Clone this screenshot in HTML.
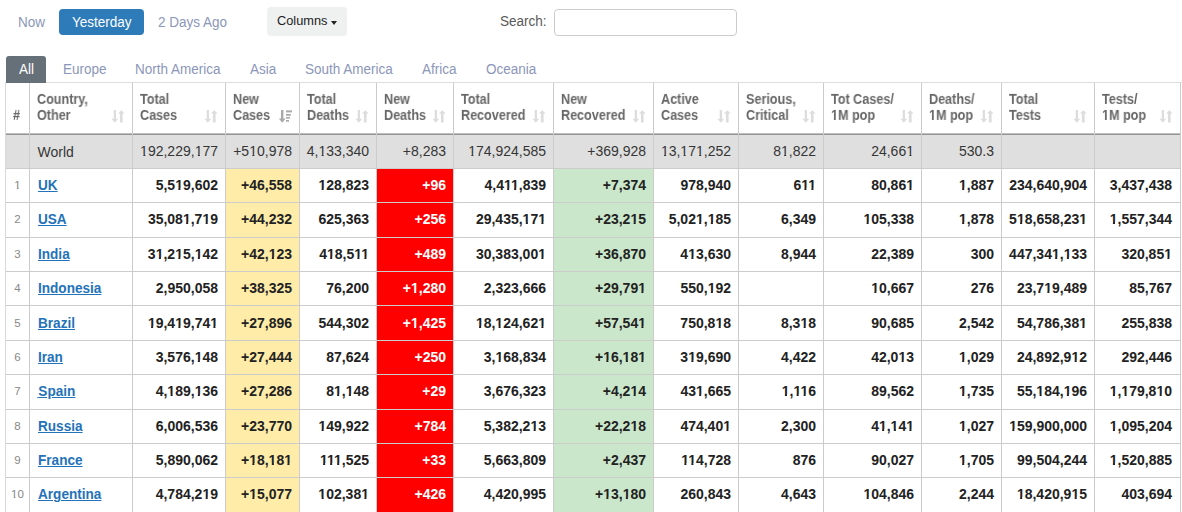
<!DOCTYPE html>
<html><head><meta charset="utf-8">
<style>
html,body{margin:0;padding:0;background:#fff;width:1182px;height:512px;overflow:hidden;}
body{font-family:"Liberation Sans",sans-serif;position:relative;color:#333;}
.abs{position:absolute;white-space:nowrap;}
.lnk{color:#8c96b8;font-size:14px;transform:scaleX(0.965);transform-origin:0 0;}
.tt{font-size:14px;transform:scaleX(0.965);transform-origin:0 0;}
.btn{position:absolute;box-sizing:border-box;}
.vl{position:absolute;width:1px;background:#ccc;}
.hl{position:absolute;height:1px;background:#ccc;}
.cell{position:absolute;white-space:nowrap;}
.hd{font-weight:bold;font-size:13px;color:#666;will-change:transform;line-height:14.8px;transform:scale(0.97,1.08);transform-origin:0 0;}
.num{font-weight:bold;font-size:14px;color:#222;text-align:right;}
.wn{font-size:14px;color:#363636;text-align:right;}
.si{position:absolute;}
.o{clip-path:polygon(0 0,100% 0,100% 0.78em,0.378em 0.78em,0.378em 100%,0.228em 100%,0.228em 0.78em,0 0.78em);}
</style></head><body>

<div class="abs lnk" style="left:18px;top:13.5px;">Now</div>
<div class="btn" style="left:59px;top:9px;width:85px;height:26px;background:#2d7bb8;border-radius:4px;"></div>
<div class="abs tt" style="left:71.5px;top:13.5px;color:#fff;">Yesterday</div>
<div class="abs lnk" style="left:158px;top:13.5px;">2 Days Ago</div>
<div class="btn" style="left:267px;top:7px;width:80px;height:28.5px;background:#eff0f0;border-radius:4px;"></div>
<div class="abs" style="left:277px;top:13px;color:#222;font-size:13.6px;transform:scaleX(0.94);transform-origin:0 0;">Columns</div>
<div class="abs" style="left:330.5px;top:21px;width:0;height:0;border-left:3.5px solid transparent;border-right:3.5px solid transparent;border-top:4px solid #222;"></div>
<div class="abs tt" style="left:500px;top:12.5px;color:#595959;">Search:</div>
<div class="btn" style="left:554px;top:9px;width:183px;height:27px;border:1px solid #ccc;border-radius:4px;"></div>
<div class="btn" style="left:6px;top:56px;width:40px;height:27px;background:#667078;border-radius:3px 3px 0 0;z-index:2;"></div>
<div class="abs tt" style="left:18.5px;top:61px;color:#fff;z-index:3;">All</div>
<div class="abs lnk" style="left:63px;top:61px;">Europe</div>
<div class="abs lnk" style="left:135px;top:61px;">North America</div>
<div class="abs lnk" style="left:250px;top:61px;">Asia</div>
<div class="abs lnk" style="left:305.4px;top:61px;">South America</div>
<div class="abs lnk" style="left:422px;top:61px;">Africa</div>
<div class="abs lnk" style="left:485.8px;top:61px;">Oceania</div>
<div class="abs" style="left:5px;top:135px;width:1175px;height:33px;background:#dfdfdf;"></div>
<div class="abs" style="left:226px;top:169px;width:73px;height:33px;background:#feeca8;"></div>
<div class="abs" style="left:377px;top:169px;width:76px;height:33px;background:#ff0000;"></div>
<div class="abs" style="left:554px;top:169px;width:99px;height:33px;background:#cae7cb;"></div>
<div class="abs" style="left:226px;top:203px;width:73px;height:34px;background:#feeca8;"></div>
<div class="abs" style="left:377px;top:203px;width:76px;height:34px;background:#ff0000;"></div>
<div class="abs" style="left:554px;top:203px;width:99px;height:34px;background:#cae7cb;"></div>
<div class="abs" style="left:226px;top:238px;width:73px;height:33px;background:#feeca8;"></div>
<div class="abs" style="left:377px;top:238px;width:76px;height:33px;background:#ff0000;"></div>
<div class="abs" style="left:554px;top:238px;width:99px;height:33px;background:#cae7cb;"></div>
<div class="abs" style="left:226px;top:272px;width:73px;height:33px;background:#feeca8;"></div>
<div class="abs" style="left:377px;top:272px;width:76px;height:33px;background:#ff0000;"></div>
<div class="abs" style="left:554px;top:272px;width:99px;height:33px;background:#cae7cb;"></div>
<div class="abs" style="left:226px;top:306px;width:73px;height:34px;background:#feeca8;"></div>
<div class="abs" style="left:377px;top:306px;width:76px;height:34px;background:#ff0000;"></div>
<div class="abs" style="left:554px;top:306px;width:99px;height:34px;background:#cae7cb;"></div>
<div class="abs" style="left:226px;top:341px;width:73px;height:33px;background:#feeca8;"></div>
<div class="abs" style="left:377px;top:341px;width:76px;height:33px;background:#ff0000;"></div>
<div class="abs" style="left:554px;top:341px;width:99px;height:33px;background:#cae7cb;"></div>
<div class="abs" style="left:226px;top:375px;width:73px;height:34px;background:#feeca8;"></div>
<div class="abs" style="left:377px;top:375px;width:76px;height:34px;background:#ff0000;"></div>
<div class="abs" style="left:554px;top:375px;width:99px;height:34px;background:#cae7cb;"></div>
<div class="abs" style="left:226px;top:410px;width:73px;height:33px;background:#feeca8;"></div>
<div class="abs" style="left:377px;top:410px;width:76px;height:33px;background:#ff0000;"></div>
<div class="abs" style="left:554px;top:410px;width:99px;height:33px;background:#cae7cb;"></div>
<div class="abs" style="left:226px;top:444px;width:73px;height:33px;background:#feeca8;"></div>
<div class="abs" style="left:377px;top:444px;width:76px;height:33px;background:#ff0000;"></div>
<div class="abs" style="left:554px;top:444px;width:99px;height:33px;background:#cae7cb;"></div>
<div class="abs" style="left:226px;top:478px;width:73px;height:34px;background:#feeca8;"></div>
<div class="abs" style="left:377px;top:478px;width:76px;height:34px;background:#ff0000;"></div>
<div class="abs" style="left:554px;top:478px;width:99px;height:34px;background:#cae7cb;"></div>
<div class="hl" style="left:5px;top:82px;width:1177px;background:#ddd;"></div>
<div class="hl" style="left:5px;top:133px;width:1176px;height:1px;background:#bebebe;"></div>
<div class="hl" style="left:5px;top:134px;width:1176px;height:1px;background:#959595;"></div>
<div class="hl" style="left:5px;top:168px;width:1176px;"></div>
<div class="hl" style="left:5px;top:202px;width:1176px;"></div>
<div class="hl" style="left:5px;top:237px;width:1176px;"></div>
<div class="hl" style="left:5px;top:271px;width:1176px;"></div>
<div class="hl" style="left:5px;top:305px;width:1176px;"></div>
<div class="hl" style="left:5px;top:340px;width:1176px;"></div>
<div class="hl" style="left:5px;top:374px;width:1176px;"></div>
<div class="hl" style="left:5px;top:409px;width:1176px;"></div>
<div class="hl" style="left:5px;top:443px;width:1176px;"></div>
<div class="hl" style="left:5px;top:477px;width:1176px;"></div>
<div class="vl" style="left:5px;top:83px;height:429px;background:#d8d8d8;"></div>
<div class="vl" style="left:29px;top:83px;height:429px;background:#ccc;"></div>
<div class="vl" style="left:132px;top:83px;height:429px;background:#ccc;"></div>
<div class="vl" style="left:225px;top:83px;height:429px;background:#ccc;"></div>
<div class="vl" style="left:299px;top:83px;height:429px;background:#ccc;"></div>
<div class="vl" style="left:376px;top:83px;height:429px;background:#ccc;"></div>
<div class="vl" style="left:453px;top:83px;height:429px;background:#ccc;"></div>
<div class="vl" style="left:553px;top:83px;height:429px;background:#ccc;"></div>
<div class="vl" style="left:653px;top:83px;height:429px;background:#ccc;"></div>
<div class="vl" style="left:738px;top:83px;height:429px;background:#ccc;"></div>
<div class="vl" style="left:823px;top:83px;height:429px;background:#ccc;"></div>
<div class="vl" style="left:921px;top:83px;height:429px;background:#ccc;"></div>
<div class="vl" style="left:1001px;top:83px;height:429px;background:#ccc;"></div>
<div class="vl" style="left:1094px;top:83px;height:429px;background:#ccc;"></div>
<div class="vl" style="left:1180px;top:83px;height:429px;background:#ccc;"></div>
<div class="cell hd" style="left:13px;top:108px;">#</div>
<div class="cell hd" style="left:37px;top:91.5px;">Country,<br>Other</div>
<svg class="si" style="left:111px;top:110px;" width="14" height="13" viewBox="0 0 14 13"><path d="M2.7 0h2.3v8.7h2.2L3.85 12.8L0.4 8.7h2.3z" fill="#ddd"/><path d="M8.9 12.5V3.6H6.9L10.3 0.2L13.7 3.6h-2.1V12.5z" fill="#ddd"/></svg>
<div class="cell hd" style="left:140px;top:91.5px;">Total<br>Cases</div>
<svg class="si" style="left:204px;top:110px;" width="14" height="13" viewBox="0 0 14 13"><path d="M2.7 0h2.3v8.7h2.2L3.85 12.8L0.4 8.7h2.3z" fill="#ddd"/><path d="M8.9 12.5V3.6H6.9L10.3 0.2L13.7 3.6h-2.1V12.5z" fill="#ddd"/></svg>
<div class="cell hd" style="left:233px;top:91.5px;">New<br>Cases</div>
<svg class="si" style="left:279px;top:110px;" width="14" height="13" viewBox="0 0 14 13"><path d="M2 0h2.4v8.6h2.2L3.2 12.8L-0.2 8.6H2z" fill="#aaa"/><rect x="7" y="0.4" width="6" height="2" fill="#aaa"/><rect x="7" y="4" width="4.8" height="1.8" fill="#aaa"/><rect x="7" y="7" width="4" height="1.6" fill="#aaa"/><rect x="7" y="10" width="3" height="1.7" fill="#aaa"/></svg>
<div class="cell hd" style="left:307px;top:91.5px;">Total<br>Deaths</div>
<svg class="si" style="left:355px;top:110px;" width="14" height="13" viewBox="0 0 14 13"><path d="M2.7 0h2.3v8.7h2.2L3.85 12.8L0.4 8.7h2.3z" fill="#ddd"/><path d="M8.9 12.5V3.6H6.9L10.3 0.2L13.7 3.6h-2.1V12.5z" fill="#ddd"/></svg>
<div class="cell hd" style="left:384px;top:91.5px;">New<br>Deaths</div>
<svg class="si" style="left:432px;top:110px;" width="14" height="13" viewBox="0 0 14 13"><path d="M2.7 0h2.3v8.7h2.2L3.85 12.8L0.4 8.7h2.3z" fill="#ddd"/><path d="M8.9 12.5V3.6H6.9L10.3 0.2L13.7 3.6h-2.1V12.5z" fill="#ddd"/></svg>
<div class="cell hd" style="left:461px;top:91.5px;">Total<br>Recovered</div>
<svg class="si" style="left:532px;top:110px;" width="14" height="13" viewBox="0 0 14 13"><path d="M2.7 0h2.3v8.7h2.2L3.85 12.8L0.4 8.7h2.3z" fill="#ddd"/><path d="M8.9 12.5V3.6H6.9L10.3 0.2L13.7 3.6h-2.1V12.5z" fill="#ddd"/></svg>
<div class="cell hd" style="left:561px;top:91.5px;">New<br>Recovered</div>
<svg class="si" style="left:632px;top:110px;" width="14" height="13" viewBox="0 0 14 13"><path d="M2.7 0h2.3v8.7h2.2L3.85 12.8L0.4 8.7h2.3z" fill="#ddd"/><path d="M8.9 12.5V3.6H6.9L10.3 0.2L13.7 3.6h-2.1V12.5z" fill="#ddd"/></svg>
<div class="cell hd" style="left:661px;top:91.5px;">Active<br>Cases</div>
<svg class="si" style="left:717px;top:110px;" width="14" height="13" viewBox="0 0 14 13"><path d="M2.7 0h2.3v8.7h2.2L3.85 12.8L0.4 8.7h2.3z" fill="#ddd"/><path d="M8.9 12.5V3.6H6.9L10.3 0.2L13.7 3.6h-2.1V12.5z" fill="#ddd"/></svg>
<div class="cell hd" style="left:746px;top:91.5px;">Serious,<br>Critical</div>
<svg class="si" style="left:802px;top:110px;" width="14" height="13" viewBox="0 0 14 13"><path d="M2.7 0h2.3v8.7h2.2L3.85 12.8L0.4 8.7h2.3z" fill="#ddd"/><path d="M8.9 12.5V3.6H6.9L10.3 0.2L13.7 3.6h-2.1V12.5z" fill="#ddd"/></svg>
<div class="cell hd" style="left:831px;top:91.5px;">Tot&nbsp;Cases/<br><span class="o">1</span>M pop</div>
<svg class="si" style="left:900px;top:110px;" width="14" height="13" viewBox="0 0 14 13"><path d="M2.7 0h2.3v8.7h2.2L3.85 12.8L0.4 8.7h2.3z" fill="#ddd"/><path d="M8.9 12.5V3.6H6.9L10.3 0.2L13.7 3.6h-2.1V12.5z" fill="#ddd"/></svg>
<div class="cell hd" style="left:929px;top:91.5px;">Deaths/<br><span class="o">1</span>M pop</div>
<svg class="si" style="left:980px;top:110px;" width="14" height="13" viewBox="0 0 14 13"><path d="M2.7 0h2.3v8.7h2.2L3.85 12.8L0.4 8.7h2.3z" fill="#ddd"/><path d="M8.9 12.5V3.6H6.9L10.3 0.2L13.7 3.6h-2.1V12.5z" fill="#ddd"/></svg>
<div class="cell hd" style="left:1009px;top:91.5px;">Total<br>Tests</div>
<svg class="si" style="left:1073px;top:110px;" width="14" height="13" viewBox="0 0 14 13"><path d="M2.7 0h2.3v8.7h2.2L3.85 12.8L0.4 8.7h2.3z" fill="#ddd"/><path d="M8.9 12.5V3.6H6.9L10.3 0.2L13.7 3.6h-2.1V12.5z" fill="#ddd"/></svg>
<div class="cell hd" style="left:1102px;top:91.5px;">Tests/<br><span class="o">1</span>M pop</div>
<svg class="si" style="left:1159px;top:110px;" width="14" height="13" viewBox="0 0 14 13"><path d="M2.7 0h2.3v8.7h2.2L3.85 12.8L0.4 8.7h2.3z" fill="#ddd"/><path d="M8.9 12.5V3.6H6.9L10.3 0.2L13.7 3.6h-2.1V12.5z" fill="#ddd"/></svg>
<div class="cell" style="left:37.5px;top:135.5px;height:33px;line-height:33px;font-size:14px;color:#363636;">World</div>
<div class="cell wn" style="left:133px;width:85px;top:135px;height:33px;line-height:33px;"><span class="o">1</span>92,229,<span class="o">1</span>77</div>
<div class="cell wn" style="left:226px;width:66px;top:135px;height:33px;line-height:33px;">+5<span class="o">1</span>0,978</div>
<div class="cell wn" style="left:300px;width:69px;top:135px;height:33px;line-height:33px;">4,<span class="o">1</span>33,340</div>
<div class="cell wn" style="left:377px;width:69px;top:135px;height:33px;line-height:33px;">+8,283</div>
<div class="cell wn" style="left:454px;width:92px;top:135px;height:33px;line-height:33px;"><span class="o">1</span>74,924,585</div>
<div class="cell wn" style="left:554px;width:92px;top:135px;height:33px;line-height:33px;">+369,928</div>
<div class="cell wn" style="left:654px;width:77px;top:135px;height:33px;line-height:33px;"><span class="o">1</span>3,<span class="o">1</span>7<span class="o">1</span>,252</div>
<div class="cell wn" style="left:739px;width:77px;top:135px;height:33px;line-height:33px;">8<span class="o">1</span>,822</div>
<div class="cell wn" style="left:824px;width:90px;top:135px;height:33px;line-height:33px;">24,66<span class="o">1</span></div>
<div class="cell wn" style="left:922px;width:72px;top:135px;height:33px;line-height:33px;">530.3</div>
<div class="cell" style="left:6px;width:23px;text-align:center;top:169px;height:33px;line-height:33px;font-size:11.5px;color:#888;"><span class="o">1</span></div>
<div class="cell" style="left:37.6px;top:169px;height:33px;line-height:33px;font-size:14px;transform:scaleX(0.97);transform-origin:0 0;font-weight:bold;color:#2472b9;text-decoration:underline;">UK</div>
<div class="cell num" style="left:133px;width:85px;top:169px;height:33px;line-height:33px;">5,5<span class="o">1</span>9,602</div>
<div class="cell num" style="left:226px;width:66px;top:169px;height:33px;line-height:33px;">+46,558</div>
<div class="cell num" style="left:300px;width:69px;top:169px;height:33px;line-height:33px;"><span class="o">1</span>28,823</div>
<div class="cell num" style="left:377px;width:69px;top:169px;height:33px;line-height:33px;color:#fff;">+96</div>
<div class="cell num" style="left:454px;width:92px;top:169px;height:33px;line-height:33px;">4,4<span class="o">1</span><span class="o">1</span>,839</div>
<div class="cell num" style="left:554px;width:92px;top:169px;height:33px;line-height:33px;">+7,374</div>
<div class="cell num" style="left:654px;width:77px;top:169px;height:33px;line-height:33px;">978,940</div>
<div class="cell num" style="left:739px;width:77px;top:169px;height:33px;line-height:33px;">6<span class="o">1</span><span class="o">1</span></div>
<div class="cell num" style="left:824px;width:90px;top:169px;height:33px;line-height:33px;">80,86<span class="o">1</span></div>
<div class="cell num" style="left:922px;width:72px;top:169px;height:33px;line-height:33px;"><span class="o">1</span>,887</div>
<div class="cell num" style="left:1002px;width:85px;top:169px;height:33px;line-height:33px;">234,640,904</div>
<div class="cell num" style="left:1095px;width:77px;top:169px;height:33px;line-height:33px;">3,437,438</div>
<div class="cell" style="left:6px;width:23px;text-align:center;top:202px;height:34px;line-height:34px;font-size:11.5px;color:#888;">2</div>
<div class="cell" style="left:37.6px;top:202px;height:34px;line-height:34px;font-size:14px;transform:scaleX(0.97);transform-origin:0 0;font-weight:bold;color:#2472b9;text-decoration:underline;">USA</div>
<div class="cell num" style="left:133px;width:85px;top:202px;height:34px;line-height:34px;">35,08<span class="o">1</span>,7<span class="o">1</span>9</div>
<div class="cell num" style="left:226px;width:66px;top:202px;height:34px;line-height:34px;">+44,232</div>
<div class="cell num" style="left:300px;width:69px;top:202px;height:34px;line-height:34px;">625,363</div>
<div class="cell num" style="left:377px;width:69px;top:202px;height:34px;line-height:34px;color:#fff;">+256</div>
<div class="cell num" style="left:454px;width:92px;top:202px;height:34px;line-height:34px;">29,435,<span class="o">1</span>7<span class="o">1</span></div>
<div class="cell num" style="left:554px;width:92px;top:202px;height:34px;line-height:34px;">+23,2<span class="o">1</span>5</div>
<div class="cell num" style="left:654px;width:77px;top:202px;height:34px;line-height:34px;">5,02<span class="o">1</span>,<span class="o">1</span>85</div>
<div class="cell num" style="left:739px;width:77px;top:202px;height:34px;line-height:34px;">6,349</div>
<div class="cell num" style="left:824px;width:90px;top:202px;height:34px;line-height:34px;"><span class="o">1</span>05,338</div>
<div class="cell num" style="left:922px;width:72px;top:202px;height:34px;line-height:34px;"><span class="o">1</span>,878</div>
<div class="cell num" style="left:1002px;width:85px;top:202px;height:34px;line-height:34px;">5<span class="o">1</span>8,658,23<span class="o">1</span></div>
<div class="cell num" style="left:1095px;width:77px;top:202px;height:34px;line-height:34px;"><span class="o">1</span>,557,344</div>
<div class="cell" style="left:6px;width:23px;text-align:center;top:238px;height:33px;line-height:33px;font-size:11.5px;color:#888;">3</div>
<div class="cell" style="left:37.6px;top:238px;height:33px;line-height:33px;font-size:14px;transform:scaleX(0.97);transform-origin:0 0;font-weight:bold;color:#2472b9;text-decoration:underline;">India</div>
<div class="cell num" style="left:133px;width:85px;top:238px;height:33px;line-height:33px;">3<span class="o">1</span>,2<span class="o">1</span>5,<span class="o">1</span>42</div>
<div class="cell num" style="left:226px;width:66px;top:238px;height:33px;line-height:33px;">+42,<span class="o">1</span>23</div>
<div class="cell num" style="left:300px;width:69px;top:238px;height:33px;line-height:33px;">4<span class="o">1</span>8,5<span class="o">1</span><span class="o">1</span></div>
<div class="cell num" style="left:377px;width:69px;top:238px;height:33px;line-height:33px;color:#fff;">+489</div>
<div class="cell num" style="left:454px;width:92px;top:238px;height:33px;line-height:33px;">30,383,00<span class="o">1</span></div>
<div class="cell num" style="left:554px;width:92px;top:238px;height:33px;line-height:33px;">+36,870</div>
<div class="cell num" style="left:654px;width:77px;top:238px;height:33px;line-height:33px;">4<span class="o">1</span>3,630</div>
<div class="cell num" style="left:739px;width:77px;top:238px;height:33px;line-height:33px;">8,944</div>
<div class="cell num" style="left:824px;width:90px;top:238px;height:33px;line-height:33px;">22,389</div>
<div class="cell num" style="left:922px;width:72px;top:238px;height:33px;line-height:33px;">300</div>
<div class="cell num" style="left:1002px;width:85px;top:238px;height:33px;line-height:33px;">447,34<span class="o">1</span>,<span class="o">1</span>33</div>
<div class="cell num" style="left:1095px;width:77px;top:238px;height:33px;line-height:33px;">320,85<span class="o">1</span></div>
<div class="cell" style="left:6px;width:23px;text-align:center;top:272px;height:33px;line-height:33px;font-size:11.5px;color:#888;">4</div>
<div class="cell" style="left:37.6px;top:272px;height:33px;line-height:33px;font-size:14px;transform:scaleX(0.97);transform-origin:0 0;font-weight:bold;color:#2472b9;text-decoration:underline;">Indonesia</div>
<div class="cell num" style="left:133px;width:85px;top:272px;height:33px;line-height:33px;">2,950,058</div>
<div class="cell num" style="left:226px;width:66px;top:272px;height:33px;line-height:33px;">+38,325</div>
<div class="cell num" style="left:300px;width:69px;top:272px;height:33px;line-height:33px;">76,200</div>
<div class="cell num" style="left:377px;width:69px;top:272px;height:33px;line-height:33px;color:#fff;">+<span class="o">1</span>,280</div>
<div class="cell num" style="left:454px;width:92px;top:272px;height:33px;line-height:33px;">2,323,666</div>
<div class="cell num" style="left:554px;width:92px;top:272px;height:33px;line-height:33px;">+29,79<span class="o">1</span></div>
<div class="cell num" style="left:654px;width:77px;top:272px;height:33px;line-height:33px;">550,<span class="o">1</span>92</div>
<div class="cell num" style="left:824px;width:90px;top:272px;height:33px;line-height:33px;"><span class="o">1</span>0,667</div>
<div class="cell num" style="left:922px;width:72px;top:272px;height:33px;line-height:33px;">276</div>
<div class="cell num" style="left:1002px;width:85px;top:272px;height:33px;line-height:33px;">23,7<span class="o">1</span>9,489</div>
<div class="cell num" style="left:1095px;width:77px;top:272px;height:33px;line-height:33px;">85,767</div>
<div class="cell" style="left:6px;width:23px;text-align:center;top:306px;height:34px;line-height:34px;font-size:11.5px;color:#888;">5</div>
<div class="cell" style="left:37.6px;top:306px;height:34px;line-height:34px;font-size:14px;transform:scaleX(0.97);transform-origin:0 0;font-weight:bold;color:#2472b9;text-decoration:underline;">Brazil</div>
<div class="cell num" style="left:133px;width:85px;top:306px;height:34px;line-height:34px;"><span class="o">1</span>9,4<span class="o">1</span>9,74<span class="o">1</span></div>
<div class="cell num" style="left:226px;width:66px;top:306px;height:34px;line-height:34px;">+27,896</div>
<div class="cell num" style="left:300px;width:69px;top:306px;height:34px;line-height:34px;">544,302</div>
<div class="cell num" style="left:377px;width:69px;top:306px;height:34px;line-height:34px;color:#fff;">+<span class="o">1</span>,425</div>
<div class="cell num" style="left:454px;width:92px;top:306px;height:34px;line-height:34px;"><span class="o">1</span>8,<span class="o">1</span>24,62<span class="o">1</span></div>
<div class="cell num" style="left:554px;width:92px;top:306px;height:34px;line-height:34px;">+57,54<span class="o">1</span></div>
<div class="cell num" style="left:654px;width:77px;top:306px;height:34px;line-height:34px;">750,8<span class="o">1</span>8</div>
<div class="cell num" style="left:739px;width:77px;top:306px;height:34px;line-height:34px;">8,3<span class="o">1</span>8</div>
<div class="cell num" style="left:824px;width:90px;top:306px;height:34px;line-height:34px;">90,685</div>
<div class="cell num" style="left:922px;width:72px;top:306px;height:34px;line-height:34px;">2,542</div>
<div class="cell num" style="left:1002px;width:85px;top:306px;height:34px;line-height:34px;">54,786,38<span class="o">1</span></div>
<div class="cell num" style="left:1095px;width:77px;top:306px;height:34px;line-height:34px;">255,838</div>
<div class="cell" style="left:6px;width:23px;text-align:center;top:341px;height:33px;line-height:33px;font-size:11.5px;color:#888;">6</div>
<div class="cell" style="left:37.6px;top:341px;height:33px;line-height:33px;font-size:14px;transform:scaleX(0.97);transform-origin:0 0;font-weight:bold;color:#2472b9;text-decoration:underline;">Iran</div>
<div class="cell num" style="left:133px;width:85px;top:341px;height:33px;line-height:33px;">3,576,<span class="o">1</span>48</div>
<div class="cell num" style="left:226px;width:66px;top:341px;height:33px;line-height:33px;">+27,444</div>
<div class="cell num" style="left:300px;width:69px;top:341px;height:33px;line-height:33px;">87,624</div>
<div class="cell num" style="left:377px;width:69px;top:341px;height:33px;line-height:33px;color:#fff;">+250</div>
<div class="cell num" style="left:454px;width:92px;top:341px;height:33px;line-height:33px;">3,<span class="o">1</span>68,834</div>
<div class="cell num" style="left:554px;width:92px;top:341px;height:33px;line-height:33px;">+<span class="o">1</span>6,<span class="o">1</span>8<span class="o">1</span></div>
<div class="cell num" style="left:654px;width:77px;top:341px;height:33px;line-height:33px;">3<span class="o">1</span>9,690</div>
<div class="cell num" style="left:739px;width:77px;top:341px;height:33px;line-height:33px;">4,422</div>
<div class="cell num" style="left:824px;width:90px;top:341px;height:33px;line-height:33px;">42,0<span class="o">1</span>3</div>
<div class="cell num" style="left:922px;width:72px;top:341px;height:33px;line-height:33px;"><span class="o">1</span>,029</div>
<div class="cell num" style="left:1002px;width:85px;top:341px;height:33px;line-height:33px;">24,892,9<span class="o">1</span>2</div>
<div class="cell num" style="left:1095px;width:77px;top:341px;height:33px;line-height:33px;">292,446</div>
<div class="cell" style="left:6px;width:23px;text-align:center;top:374px;height:34px;line-height:34px;font-size:11.5px;color:#888;">7</div>
<div class="cell" style="left:37.6px;top:374px;height:34px;line-height:34px;font-size:14px;transform:scaleX(0.97);transform-origin:0 0;font-weight:bold;color:#2472b9;text-decoration:underline;"><span style="margin-left:-0.8px">&#8202;</span>Spain</div>
<div class="cell num" style="left:133px;width:85px;top:374px;height:34px;line-height:34px;">4,<span class="o">1</span>89,<span class="o">1</span>36</div>
<div class="cell num" style="left:226px;width:66px;top:374px;height:34px;line-height:34px;">+27,286</div>
<div class="cell num" style="left:300px;width:69px;top:374px;height:34px;line-height:34px;">8<span class="o">1</span>,<span class="o">1</span>48</div>
<div class="cell num" style="left:377px;width:69px;top:374px;height:34px;line-height:34px;color:#fff;">+29</div>
<div class="cell num" style="left:454px;width:92px;top:374px;height:34px;line-height:34px;">3,676,323</div>
<div class="cell num" style="left:554px;width:92px;top:374px;height:34px;line-height:34px;">+4,2<span class="o">1</span>4</div>
<div class="cell num" style="left:654px;width:77px;top:374px;height:34px;line-height:34px;">43<span class="o">1</span>,665</div>
<div class="cell num" style="left:739px;width:77px;top:374px;height:34px;line-height:34px;"><span class="o">1</span>,<span class="o">1</span><span class="o">1</span>6</div>
<div class="cell num" style="left:824px;width:90px;top:374px;height:34px;line-height:34px;">89,562</div>
<div class="cell num" style="left:922px;width:72px;top:374px;height:34px;line-height:34px;"><span class="o">1</span>,735</div>
<div class="cell num" style="left:1002px;width:85px;top:374px;height:34px;line-height:34px;">55,<span class="o">1</span>84,<span class="o">1</span>96</div>
<div class="cell num" style="left:1095px;width:77px;top:374px;height:34px;line-height:34px;"><span class="o">1</span>,<span class="o">1</span>79,8<span class="o">1</span>0</div>
<div class="cell" style="left:6px;width:23px;text-align:center;top:410px;height:33px;line-height:33px;font-size:11.5px;color:#888;">8</div>
<div class="cell" style="left:37.6px;top:410px;height:33px;line-height:33px;font-size:14px;transform:scaleX(0.97);transform-origin:0 0;font-weight:bold;color:#2472b9;text-decoration:underline;">Russia</div>
<div class="cell num" style="left:133px;width:85px;top:410px;height:33px;line-height:33px;">6,006,536</div>
<div class="cell num" style="left:226px;width:66px;top:410px;height:33px;line-height:33px;">+23,770</div>
<div class="cell num" style="left:300px;width:69px;top:410px;height:33px;line-height:33px;"><span class="o">1</span>49,922</div>
<div class="cell num" style="left:377px;width:69px;top:410px;height:33px;line-height:33px;color:#fff;">+784</div>
<div class="cell num" style="left:454px;width:92px;top:410px;height:33px;line-height:33px;">5,382,2<span class="o">1</span>3</div>
<div class="cell num" style="left:554px;width:92px;top:410px;height:33px;line-height:33px;">+22,2<span class="o">1</span>8</div>
<div class="cell num" style="left:654px;width:77px;top:410px;height:33px;line-height:33px;">474,40<span class="o">1</span></div>
<div class="cell num" style="left:739px;width:77px;top:410px;height:33px;line-height:33px;">2,300</div>
<div class="cell num" style="left:824px;width:90px;top:410px;height:33px;line-height:33px;">4<span class="o">1</span>,<span class="o">1</span>4<span class="o">1</span></div>
<div class="cell num" style="left:922px;width:72px;top:410px;height:33px;line-height:33px;"><span class="o">1</span>,027</div>
<div class="cell num" style="left:1002px;width:85px;top:410px;height:33px;line-height:33px;"><span class="o">1</span>59,900,000</div>
<div class="cell num" style="left:1095px;width:77px;top:410px;height:33px;line-height:33px;"><span class="o">1</span>,095,204</div>
<div class="cell" style="left:6px;width:23px;text-align:center;top:444px;height:33px;line-height:33px;font-size:11.5px;color:#888;">9</div>
<div class="cell" style="left:37.6px;top:444px;height:33px;line-height:33px;font-size:14px;transform:scaleX(0.97);transform-origin:0 0;font-weight:bold;color:#2472b9;text-decoration:underline;">France</div>
<div class="cell num" style="left:133px;width:85px;top:444px;height:33px;line-height:33px;">5,890,062</div>
<div class="cell num" style="left:226px;width:66px;top:444px;height:33px;line-height:33px;">+<span class="o">1</span>8,<span class="o">1</span>8<span class="o">1</span></div>
<div class="cell num" style="left:300px;width:69px;top:444px;height:33px;line-height:33px;"><span class="o">1</span><span class="o">1</span><span class="o">1</span>,525</div>
<div class="cell num" style="left:377px;width:69px;top:444px;height:33px;line-height:33px;color:#fff;">+33</div>
<div class="cell num" style="left:454px;width:92px;top:444px;height:33px;line-height:33px;">5,663,809</div>
<div class="cell num" style="left:554px;width:92px;top:444px;height:33px;line-height:33px;">+2,437</div>
<div class="cell num" style="left:654px;width:77px;top:444px;height:33px;line-height:33px;"><span class="o">1</span><span class="o">1</span>4,728</div>
<div class="cell num" style="left:739px;width:77px;top:444px;height:33px;line-height:33px;">876</div>
<div class="cell num" style="left:824px;width:90px;top:444px;height:33px;line-height:33px;">90,027</div>
<div class="cell num" style="left:922px;width:72px;top:444px;height:33px;line-height:33px;"><span class="o">1</span>,705</div>
<div class="cell num" style="left:1002px;width:85px;top:444px;height:33px;line-height:33px;">99,504,244</div>
<div class="cell num" style="left:1095px;width:77px;top:444px;height:33px;line-height:33px;"><span class="o">1</span>,520,885</div>
<div class="cell" style="left:6px;width:23px;text-align:center;top:477px;height:34px;line-height:34px;font-size:11.5px;color:#888;"><span class="o">1</span>0</div>
<div class="cell" style="left:37.6px;top:477px;height:34px;line-height:34px;font-size:14px;transform:scaleX(0.97);transform-origin:0 0;font-weight:bold;color:#2472b9;text-decoration:underline;">Argentina</div>
<div class="cell num" style="left:133px;width:85px;top:477px;height:34px;line-height:34px;">4,784,2<span class="o">1</span>9</div>
<div class="cell num" style="left:226px;width:66px;top:477px;height:34px;line-height:34px;">+<span class="o">1</span>5,077</div>
<div class="cell num" style="left:300px;width:69px;top:477px;height:34px;line-height:34px;"><span class="o">1</span>02,38<span class="o">1</span></div>
<div class="cell num" style="left:377px;width:69px;top:477px;height:34px;line-height:34px;color:#fff;">+426</div>
<div class="cell num" style="left:454px;width:92px;top:477px;height:34px;line-height:34px;">4,420,995</div>
<div class="cell num" style="left:554px;width:92px;top:477px;height:34px;line-height:34px;">+<span class="o">1</span>3,<span class="o">1</span>80</div>
<div class="cell num" style="left:654px;width:77px;top:477px;height:34px;line-height:34px;">260,843</div>
<div class="cell num" style="left:739px;width:77px;top:477px;height:34px;line-height:34px;">4,643</div>
<div class="cell num" style="left:824px;width:90px;top:477px;height:34px;line-height:34px;"><span class="o">1</span>04,846</div>
<div class="cell num" style="left:922px;width:72px;top:477px;height:34px;line-height:34px;">2,244</div>
<div class="cell num" style="left:1002px;width:85px;top:477px;height:34px;line-height:34px;"><span class="o">1</span>8,420,9<span class="o">1</span>5</div>
<div class="cell num" style="left:1095px;width:77px;top:477px;height:34px;line-height:34px;">403,694</div>
</body></html>
